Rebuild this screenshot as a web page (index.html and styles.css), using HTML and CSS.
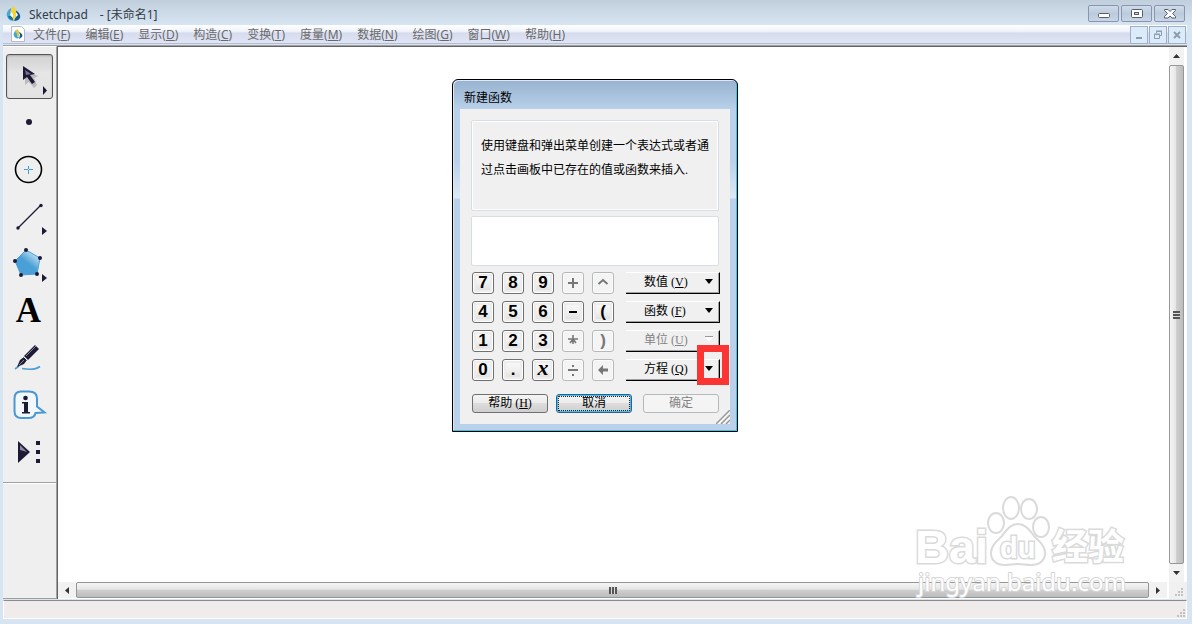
FILE: index.html
```
<!DOCTYPE html>
<html lang="zh-CN">
<head>
    <meta charset="UTF-8">
    <meta name="viewport" content="width=device-width, initial-scale=1.0">
    <title>Sketchpad - [未命名1]</title>
    <link rel="stylesheet" href="styles.css">
</head>
<body>
    <!-- title bar -->
    <header class="titlebar">
        <svg class="app-icon" width="15" height="16" viewBox="0 0 15 16">
            <path d="M5 2C2 4 0 7 1 10c1 4 4 5 7 5L6 9z" fill="#3fa9d6"/>
            <path d="M9 4c4 2 6 5 5 8-1 2-3 3-6 3l2-5z" fill="#155a8c"/>
            <path d="M2 10c1 3 3 4 6 4l-3-4z" fill="#1c6f9f"/>
            <path d="M7 0l3 3 0 8-3 4 0-7-3-2z" fill="#f3d33c"/>
            <path d="M5 6l2 2v4l-3-3zM10 6l2 3-2 2z" fill="#fff"/>
        </svg>
        <h1 class="title">Sketchpad<span class="doc-name">- [未命名1]</span></h1>
        <div class="win-controls">
            <button class="win-btn" aria-label="Minimize"><svg width="12" height="12" viewBox="0 0 12 12"><rect x="0.500" y="5.500" width="11" height="4" rx="1" fill="#fff" stroke="#565c74"/></svg></button>
            <button class="win-btn" aria-label="Maximize"><svg width="12" height="12" viewBox="0 0 12 12"><rect x="0.500" y="1.500" width="11" height="8" rx="1" fill="#fff" stroke="#565c74"/><rect x="3.500" y="4.500" width="4" height="2" fill="#c7d3e2" stroke="#565c74"/></svg></button>
            <button class="win-btn" aria-label="Close"><svg width="12" height="12" viewBox="0 0 12 12"><path d="M.5 1.500h3.500l2 2 2-2h3.500v1L8.500 5.500l3 3v1.500H8l-2-2-2 2H.5V8.500l3-3-3-3z" fill="#fff" stroke="#565c74"/></svg></button>
        </div>
    </header>

    <!-- menu -->
    <nav class="menubar">
        <svg class="doc-icon" width="14" height="16" viewBox="0 0 14 16">
            <path d="M.5.500h10l3 3v12H.5z" fill="#fff" stroke="#b5bac6"/>
            <path d="M5 4C3 6 2 8 3 10s3 3 5 2L6 8z" fill="#3fa9d6"/>
            <path d="M8 6c3 1 4 3 3 5l-3 2 1-4z" fill="#155a8c"/>
            <path d="M6 3l2 2v5l-2 1V7L4 6z" fill="#e3c83c"/>
        </svg>
        <button class="menu-item">文件(<u>F</u>)</button>
        <button class="menu-item">编辑(<u>E</u>)</button>
        <button class="menu-item">显示(<u>D</u>)</button>
        <button class="menu-item">构造(<u>C</u>)</button>
        <button class="menu-item">变换(<u>T</u>)</button>
        <button class="menu-item">度量(<u>M</u>)</button>
        <button class="menu-item">数据(<u>N</u>)</button>
        <button class="menu-item">绘图(<u>G</u>)</button>
        <button class="menu-item">窗口(<u>W</u>)</button>
        <button class="menu-item">帮助(<u>H</u>)</button>
        <div class="doc-controls">
            <button class="doc-btn" aria-label="Minimize document"><svg width="10" height="10" viewBox="0 0 10 10"><path d="M2 7h6v2H2z" fill="#8d9cab"/></svg></button>
            <button class="doc-btn" aria-label="Restore document"><svg width="10" height="10" viewBox="0 0 10 10"><path d="M3.500 3V1.500h5v4H7M1.500 4.500h5v4h-5zM3 1h6M1 4h6" fill="none" stroke="#8d9cab"/></svg></button>
            <button class="doc-btn" aria-label="Close document"><svg width="10" height="10" viewBox="0 0 10 10"><path d="M2 2l6 6M8 2L2 8" stroke="#8d9cab" stroke-width="2"/></svg></button>
        </div>
    </nav>

    <main class="workspace">
        <!-- toolbox -->
        <aside class="toolbox">
            <button class="tool active" aria-label="Arrow">
                <svg width="47" height="45" viewBox="0 0 47 45">
                    <path d="M19 16v15l4-3 5 6 3-3-3-7 4-2z" fill="#bbb"/>
                    <path d="M17 12v14l4-3 5 7 3-2-5-7 5-1z" fill="#1d1a36"/>
                    <path d="M19 16l6 4-5 1z" fill="#77748c"/>
                    <path d="M37 32v9l4-4.500z" fill="#1d1a36"/>
                </svg>
            </button>
            <button class="tool" aria-label="Point">
                <svg width="47" height="45" viewBox="0 0 47 45"><circle cx="23" cy="21" r="3" fill="#1d1a36"/></svg>
            </button>
            <button class="tool" aria-label="Compass">
                <svg width="47" height="45" viewBox="0 0 47 45">
                    <circle cx="22.500" cy="21.500" r="13" fill="none" stroke="#000" stroke-width="1.600"/>
                    <path d="M22.500 18v3M22.500 22v4M18 21.500h4M23 21.500h4" stroke="#3f9bd4"/>
                </svg>
            </button>
            <button class="tool" aria-label="Straightedge">
                <svg width="47" height="45" viewBox="0 0 47 45">
                    <path d="M12 33l23-23" stroke="#1d1a36" stroke-width="1.300"/>
                    <circle cx="12" cy="33" r="1.700" fill="#1d1a36"/>
                    <circle cx="35" cy="10.500" r="1.700" fill="#1d1a36"/>
                    <path d="M36 32v8l5-4z" fill="#1d1a36"/>
                </svg>
            </button>
            <button class="tool" aria-label="Polygon">
                <svg width="47" height="45" viewBox="0 0 47 45">
                    <defs>
                        <linearGradient id="poly" x1="0.900" y1="0.100" x2="0.500" y2="0.600">
                            <stop offset="0" stop-color="#d4ecfa"/>
                            <stop offset="0.900" stop-color="#4a9fd6"/>
                        </linearGradient>
                    </defs>
                    <path d="M20 8l14 8-3 16-16 1-6-14z" fill="url(#poly)" stroke="#4a9fd6"/>
                    <g fill="#1d1a36">
                        <circle cx="20" cy="8" r="2"/><circle cx="34" cy="16" r="2"/><circle cx="31" cy="32" r="2"/>
                        <circle cx="15" cy="33" r="2"/><circle cx="9" cy="19" r="2"/>
                        <path d="M36 32v8l5-4z"/>
                    </g>
                </svg>
            </button>
            <button class="tool tool-text" aria-label="Text">A</button>
            <button class="tool" aria-label="Marker">
                <svg width="47" height="45" viewBox="0 0 47 45">
                    <path d="M9 33l4-3M16 32.500c6 1 14 1 18-2" fill="none" stroke="#4a9fd6" stroke-width="1.600"/>
                    <path d="M11 31l3-7 4-3 3 3-3 4z" fill="#1d1a36"/>
                    <path d="M18 20l11-11 4 4-11 11z" fill="#1d1a36"/>
                    <path d="M20 20l10-10M13 29l5-5" stroke="#8a88a0"/>
                    <path d="M17 20l5 5" stroke="#efefef"/>
                </svg>
            </button>
            <button class="tool" aria-label="Information">
                <svg width="47" height="45" viewBox="0 0 47 45">
                    <path d="M15 8.500h8q8 0 8 7v8l7.500 6-9 .5q-1 5-7 5h-7q-7 0-7-7V15.500q0-7 6.500-7z" fill="#f2f7fb" stroke="#4a97d2" stroke-width="2"/>
                    <circle cx="19.500" cy="15" r="2.300" fill="#1d1a36"/>
                    <path d="M16 19h6v10h2v1.500h-8V29h2v-8.500h-2z" fill="#1d1a36"/>
                </svg>
            </button>
            <button class="tool" aria-label="Custom tools">
                <svg width="47" height="45" viewBox="0 0 47 45">
                    <path d="M12 11v22l12-11z" fill="#1d1a36"/>
                    <path d="M14 15l7 7-7-2z" fill="#8a88a0"/>
                    <path d="M30 11h4v4h-4zM30 20h4v4h-4zM30 29h4v4h-4z" fill="#1d1a36"/>
                </svg>
            </button>
        </aside>

        <div class="sketch">
            <div class="canvas"></div>
            <div class="scrollbar vertical">
                <button class="scroll-arrow" aria-label="Scroll up"><svg width="7" height="4" viewBox="0 0 7 4"><path d="M0 4h7L3.500 0z" fill="#333"/></svg></button>
                <div class="thumb"><span class="grip"></span></div>
                <button class="scroll-arrow" aria-label="Scroll down"><svg width="7" height="4" viewBox="0 0 7 4"><path d="M0 0h7L3.500 4z" fill="#333"/></svg></button>
            </div>
            <div class="scrollbar horizontal">
                <button class="scroll-arrow" aria-label="Scroll left"><svg width="4" height="7" viewBox="0 0 4 7"><path d="M4 0v7L0 3.500z" fill="#333"/></svg></button>
                <div class="thumb"><span class="grip"></span></div>
                <button class="scroll-arrow" aria-label="Scroll right"><svg width="4" height="7" viewBox="0 0 4 7"><path d="M0 0v7l4-3.500z" fill="#333"/></svg></button>
            </div>
            <div class="corner"><svg width="8" height="8" viewBox="0 0 8 8"><path d="M6 0h2v2H6zM3 3h2v2H3zM6 3h2v2H6zM0 6h2v2H0zM3 6h2v2H3zM6 6h2v2H6z" fill="#c3c3c3"/></svg></div>
        </div>
    </main>

    <footer class="statusbar"><svg width="8" height="8" viewBox="0 0 8 8"><path d="M6 0h2v2H6zM3 3h2v2H3zM6 3h2v2H6zM0 6h2v2H0zM3 6h2v2H3zM6 6h2v2H6z" fill="#c3c0be"/></svg></footer>

    <!-- new function dialog -->
    <section class="dialog" role="dialog" aria-labelledby="dialogTitle">
        <h2 class="dialog-title" id="dialogTitle">新建函数</h2>
        <div class="dialog-body">
            <p class="hint" id="hint">使用键盘和弹出菜单创建一个表达式或者通过点击画板中已存在的值或函数来插入.</p>
            <input class="expression" type="text" aria-labelledby="dialogTitle" aria-describedby="hint">
            <div class="calc">
                <div class="keys">
                    <button class="key">7</button>
                    <button class="key">8</button>
                    <button class="key">9</button>
                    <button class="key" disabled aria-label="+"><svg width="12" height="12" viewBox="0 0 12 12"><path d="M6 1v10M1 6h10" stroke="#777" stroke-width="2"/></svg></button>
                    <button class="key" disabled aria-label="^"><svg width="12" height="12" viewBox="0 0 12 12"><path d="M1.500 7L6 3l4.500 4" fill="none" stroke="#777" stroke-width="2"/></svg></button>
                    <button class="key">4</button>
                    <button class="key">5</button>
                    <button class="key">6</button>
                    <button class="key" aria-label="-"><svg width="12" height="12" viewBox="0 0 12 12"><path d="M2 5h8v2H2z"/></svg></button>
                    <button class="key">(</button>
                    <button class="key">1</button>
                    <button class="key">2</button>
                    <button class="key">3</button>
                    <button class="key" disabled aria-label="*"><svg width="12" height="12" viewBox="0 0 12 12"><path d="M6 0v9M1 4h10M3 8l3-4 3 4" fill="none" stroke="#777" stroke-width="1.600"/></svg></button>
                    <button class="key" disabled>)</button>
                    <button class="key">0</button>
                    <button class="key">.</button>
                    <button class="key key-x">x</button>
                    <button class="key" disabled aria-label="÷"><svg width="12" height="12" viewBox="0 0 12 12"><path d="M1 5h10v2H1zM5 1h2v2H5zM5 10h2v2H5z" fill="#777"/></svg></button>
                    <button class="key" disabled aria-label="Backspace"><svg width="12" height="12" viewBox="0 0 12 12"><path d="M1 6l5-5v3.500h5v3H6V11z" fill="#777"/></svg></button>
                </div>
                <div class="popups">
                    <button class="popup" aria-haspopup="menu"><span class="popup-label">数值 (<u>V</u>)</span><span class="caret"></span></button>
                    <button class="popup" aria-haspopup="menu"><span class="popup-label">函数 (<u>F</u>)</span><span class="caret"></span></button>
                    <button class="popup" aria-haspopup="menu" disabled><span class="popup-label">单位 (<u>U</u>)</span><span class="caret"></span></button>
                    <button class="popup" aria-haspopup="menu"><span class="popup-label">方程 (<u>Q</u>)</span><span class="caret"></span><span class="highlight"></span></button>
                </div>
            </div>
            <div class="actions">
                <button class="action">帮助 (<u>H</u>)</button>
                <button class="action default">取消</button>
                <button class="action last" disabled>确定</button>
            </div>
            <svg class="resize" width="14" height="14" viewBox="0 0 14 14"><path d="M0 14L14 0M5 14l9-9M10 14l4-4" stroke="#999" stroke-width="1.500"/><path d="M2 14L14 2M7 14l7-7" stroke="#fff"/></svg>
        </div>
    </section>

    <!-- watermark -->
    <svg class="watermark" width="225" height="115" viewBox="0 0 225 115">
        <g class="mark">
            <text class="mark-bold" x="5" y="73">Bai</text>
            <ellipse cx="86" cy="33" rx="8" ry="10"/>
            <ellipse cx="101" cy="18" rx="8" ry="11"/>
            <ellipse cx="119" cy="19" rx="8" ry="10"/>
            <ellipse cx="131" cy="37" rx="8" ry="10"/>
            <path d="M108 34c8 0 12 7 17 13 5 5 10 9 10 16 0 8-6 12-14 12-5 0-8-1-13-1s-8 1-13 1c-8 0-14-4-14-12 0-7 5-11 10-16 5-6 9-13 17-13z"/>
            <text class="mark-du" x="90" y="68">du</text>
            <text class="mark-cjk" x="142" y="70">经验</text>
        </g>
        <text class="mark-url" x="8" y="101">jingyan.baidu.com</text>
    </svg>
</body>
</html>
```
FILE: styles.css
```
* {
    box-sizing: border-box;
}
body {
    font-family: "Noto Sans", "Noto Sans CJK SC", sans-serif;
    font-size: 12px;
    margin: 0;
    padding: 0 5px 5px 3px;
    min-height: 100vh;
    display: flex;
    flex-direction: column;
    position: relative;
    overflow: hidden;
    background-color: #d7e4f2;
    color: #000;
}
button {
    font: inherit;
    color: inherit;
    margin: 0;
    padding: 0;
    border: none;
    background: none;
    display: flex;
    align-items: center;
    justify-content: center;
}
svg {
    display: block;
    flex: none;
}

/* title bar */
.titlebar {
    height: 25px;
    margin: 0 -5px 0 -3px;
    padding: 2px 7px 0 6px;
    display: flex;
    align-items: center;
    background: linear-gradient(#c1cfdc, #d7e4f2);
}
.title {
    flex: 1;
    margin: 0 0 0 8px;
    padding-top: 2px;
    font-size: 12px;
    font-weight: normal;
    line-height: 20px;
    color: #333c48;
}
.doc-name {
    margin-left: 12px;
}
.win-controls {
    display: flex;
    gap: 2px;
}
.win-btn {
    width: 31px;
    height: 17px;
    border: 1px solid #8a94b2;
    border-radius: 2px;
    background: linear-gradient(#cfdbe8, #bccbdc 50%, #c8d6e5);
}

/* menu */
.menubar {
    display: flex;
    align-items: center;
    height: 19px;
    padding-left: 8px;
    border-bottom: 1px solid #b6bdd2;
    background: linear-gradient(#fff, #f0f3fa 35%, #d6dcee 45%, #dfe5f4);
}
.doc-icon {
    margin-right: 1px;
}
.menu-item {
    display: block;
    margin-right: 1px;
    padding: 1px 7px 0;
    line-height: 18px;
    color: #6a6a6a;
}
.doc-controls {
    display: flex;
    gap: 1px;
    margin: 1px 1px 0 auto;
}
.doc-btn {
    width: 18px;
    height: 18px;
    border: 1px solid #9fb0c6;
    background-color: #dcebf9;
}

/* workspace */
.workspace {
    flex: 1;
    display: flex;
    margin-top: 1px;
    border-top: 1px solid #a0a0a0;
}
.toolbox {
    width: 54px;
    padding: 7px 0 0;
    background-color: #efefef;
    border-right: 1px solid #a0a0a0;
    border-top: 1px solid #fff;
    border-bottom: 1px solid #a0a0a0;
    display: flex;
    flex-direction: column;
    align-items: center;
    gap: 2px;
}
.toolbox::after {
    content: "";
    width: 100%;
    margin-top: 5px;
    border-top: 1px solid #a0a0a0;
    border-bottom: 1px solid #fff;
}
.tool {
    width: 47px;
    height: 45px;
}
.tool.active {
    border: 1px solid #555;
    border-radius: 3px;
    background: linear-gradient(#d2d2d2, #dedede 30%, #e6e6e6 40%, #e3e3e3);
    box-shadow: inset 0 1px 2px #aaa;
}
.tool-text {
    font-family: "Liberation Serif", serif;
    font-size: 35px;
    font-weight: bold;
    line-height: 43px;
    padding: 0 2px 2px 0;
}
.sketch {
    flex: 1;
    display: grid;
    grid-template-columns: 1fr 18px;
    grid-template-rows: 1fr 17px;
    border-left: 1px solid #646464;
    border-top: 1px solid #646464;
    background-color: #fff;
}
.scrollbar {
    display: flex;
    background-color: #f2f2f2;
}
.vertical {
    flex-direction: column;
    margin-right: 3px;
}
.scroll-arrow {
    flex: none;
    width: 18px;
    height: 16px;
}
.vertical .scroll-arrow {
    width: 15px;
    height: 18px;
}
.thumb {
    flex: 1;
    display: flex;
    align-items: center;
    justify-content: center;
    border: 1px solid #979797;
    border-radius: 2px;
}
.horizontal {
    height: 16px;
    margin-right: 2px;
}
.horizontal .thumb {
    background: linear-gradient(#f5f5f5, #e6e6e6 45%, #cfcfcf 50%, #bcbcbc);
}
.vertical .thumb {
    background: linear-gradient(to right, #f5f5f5, #e6e6e6 45%, #cfcfcf 50%, #bcbcbc);
}
.grip {
    width: 8px;
    height: 7px;
    background: repeating-linear-gradient(to right, #555 0 2px, #ddd 2px 3px);
}
.vertical .grip {
    width: 7px;
    height: 8px;
    background: repeating-linear-gradient(#555 0 2px, #ddd 2px 3px);
}
.corner {
    display: flex;
    align-items: flex-end;
    justify-content: flex-end;
    padding: 0 4px 3px 0;
    background-color: #f0f0f0;
}
.statusbar {
    height: 19px;
    margin-top: 1px;
    display: flex;
    align-items: flex-end;
    justify-content: flex-end;
    padding: 0 1px 1px 0;
    background-color: #f0eceb;
    border: 1px solid #fff;
    border-top-color: #8c8c8c;
}

/* dialog */
.dialog {
    position: absolute;
    top: 79px;
    left: calc(50% - 144px);
    width: 286px;
    padding: 0 7px 7px;
    border: 1px solid #000;
    border-radius: 6px 6px 0 0;
    background: linear-gradient(#98b3d0, #b9d1ea 30px, #b9d1ea 80px, #dce9f7 118px, #b9d1ea 119px);
    box-shadow: inset -1px -1px #35c6e8, inset 1px 1px #dbe8f5;
    font-family: "Liberation Serif", "Noto Sans CJK SC", serif;
}
.dialog-title {
    margin: 0;
    padding: 6px 4px 0;
    height: 29px;
    font-size: 12px;
    font-weight: normal;
    line-height: 24px;
}
.dialog-body {
    position: relative;
    padding: 11px;
    background-color: #f0f0f0;
}
.hint {
    margin: 0 0 5px;
    padding: 13px 9px;
    height: 91px;
    line-height: 24px;
    border: 1px solid #d5dfe5;
    border-radius: 2px;
    box-shadow: inset 0 0 0 1px #fff;
}
.expression {
    display: block;
    width: 100%;
    height: 50px;
    border: 1px solid #d5dfe5;
    border-radius: 2px;
    background-color: #fff;
    font: inherit;
    padding: 0 8px;
}
.calc {
    display: flex;
    justify-content: space-between;
    margin: 6px -1px 13px 1px;
}
.keys {
    display: grid;
    grid-template-columns: repeat(5, 22px);
    gap: 7px 8px;
}
.key {
    height: 22px;
    border: 1px solid #707070;
    border-radius: 3px;
    background: linear-gradient(#fafafa, #f0f0f0 50%, #dcdcdc);
    box-shadow: inset 0 0 0 1px #fff, inset 0 0 0 3px #ededed;
    font-family: "Liberation Sans", sans-serif;
    font-size: 17px;
    font-weight: bold;
    line-height: 20px;
}
.key:disabled {
    border-color: #b4b9bb;
    background: #f4f4f4;
    box-shadow: inset 0 0 0 1px #fbfbfb;
    color: #777;
}
.key-x {
    font-family: "Liberation Serif", serif;
    font-style: italic;
    font-size: 22px;
    line-height: 16px;
    padding-bottom: 4px;
}
.popups {
    display: flex;
    flex-direction: column;
    gap: 7px;
    width: 94px;
}
.popup {
    position: relative;
    justify-content: space-between;
    height: 22px;
    padding: 0 6px 3px 18px;
    border: 1px solid #000;
    border-left: none;
    border-top-color: #fff;
    box-shadow: inset -1px -1px #a0a0a0;
    background-color: #f0f0f0;
}
.popup-label {
    line-height: 16px;
}
.popup:disabled {
    color: #838383;
}
.caret {
    border: 4px solid transparent;
    border-top: 5px solid #000;
    border-bottom: none;
}
.popup:disabled .caret {
    border-top-color: #fff;
    box-shadow: 0 -1px #999;
}
.highlight {
    position: absolute;
    top: -15px;
    right: -10px;
    width: 32px;
    height: 40px;
    border: 7px solid #fb3434;
}
.actions {
    display: flex;
    gap: 8px;
    padding-left: 1px;
}
.action {
    display: block;
    width: 76px;
    height: 19px;
    line-height: 17px;
    border: 1px solid #707070;
    border-radius: 3px;
    background: linear-gradient(#f4f4f4, #ececec 48%, #dddddd 50%, #cfcfcf);
}
.action.default {
    border-color: #2c628b;
    box-shadow: inset 0 0 0 1px #3fc0ee;
    outline: 1px dotted #222;
    outline-offset: -3px;
}
.action.last {
    margin-left: auto;
}
.action:disabled {
    border-color: #b4b9bb;
    background: #f4f4f4;
    color: #838383;
}
.resize {
    position: absolute;
    right: 0;
    bottom: 0;
}

/* watermark */
.watermark {
    position: absolute;
    right: 57px;
    bottom: 19px;
    pointer-events: none;
}
.mark {
    fill: #fff;
    stroke: #dadada;
    stroke-width: 2px;
}
.mark text {
    font-weight: bold;
    stroke-width: 3px;
    paint-order: stroke;
}
.mark-bold {
    font-family: "Liberation Sans", sans-serif;
    font-size: 47px;
}
.mark-du {
    font-family: "Liberation Sans", sans-serif;
    font-size: 29px;
}
.mark-cjk {
    font-family: "Noto Sans CJK SC", sans-serif;
    font-size: 36px;
}
.mark-url {
    font-family: "Noto Sans", sans-serif;
    font-size: 24px;
    fill: #fff;
    stroke: #d6d6d6;
    stroke-width: 2px;
    paint-order: stroke;
}
```
